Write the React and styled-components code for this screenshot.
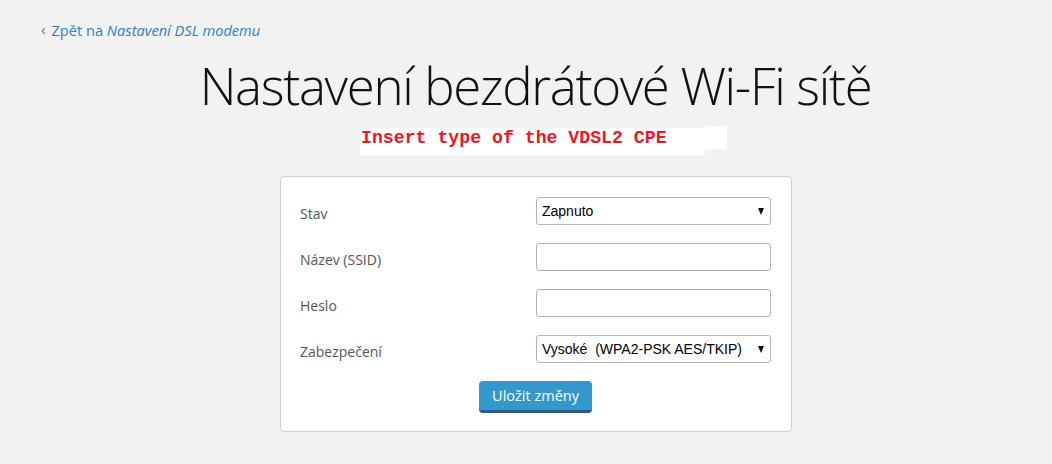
import React, { useState } from "react";
import styled, { createGlobalStyle } from "styled-components";

const Global = createGlobalStyle`
  html, body { margin: 0; padding: 0; background: #f2f2f2; }
  body { font-family: "Open Sans", "Liberation Sans", sans-serif; }
`;

const Page = styled.div`
  width: 1052px;
  height: 464px;
  box-sizing: border-box;
  padding-top: 20px;
  display: flex;
  flex-direction: column;
  overflow: hidden;
`;

const BackLink = styled.a`
  margin-left: 41px;
  font-size: 14.6px;
  line-height: 20px;
  color: #2b82c9;
  text-decoration: none;
  display: flex;
  align-items: center;
  gap: 6px;
  em { font-style: italic; }
`;

const Chevron = styled.span`
  font-size: 15px;
  line-height: 20px;
  margin-top: -2px;
`;

const Title = styled.h1`
  margin: 13px 0 0;
  padding-left: 19px;
  text-align: center;
  font-weight: 300;
  font-size: 51px;
  line-height: 64px;
  color: #111;
  letter-spacing: -1.33px;
`;

const Badge = styled.div`
  align-self: flex-start;
  margin: 9px 0 0 360px;
  display: flex;
  align-items: flex-start;
`;

const BadgeMain = styled.div`
  background: #fff;
  width: 345px;
  box-sizing: border-box;
  padding: 1px 0 8px 1px;
  margin-top: 2px;
  font-family: "Liberation Mono", "DejaVu Sans Mono", monospace;
  font-weight: bold;
  font-size: 18.2px;
  line-height: 18px;
  color: #ee1526;
  white-space: pre;
`;

const BadgeTail = styled.div`
  background: #fff;
  width: 22px;
  height: 23px;
`;

const Card = styled.form`
  align-self: flex-start;
  margin: 21px 0 0 280px;
  width: 512px;
  box-sizing: border-box;
  background: #fff;
  border: 1px solid #cfcfcf;
  border-radius: 4px;
  padding: 20px 20px 18px 19px;
  display: flex;
  flex-direction: column;
  gap: 18px;
`;

const Row = styled.div`
  display: flex;
  align-items: center;
  justify-content: space-between;
  height: 28px;
`;

const Label = styled.label`
  font-size: 14px;
  color: #555;
  margin-top: 4px;
`;

const FieldBox = styled.div`
  position: relative;
  width: 235px;
  height: 28px;
`;

const Input = styled.input`
  box-sizing: border-box;
  width: 100%;
  height: 100%;
  border: 1px solid #b4b4b4;
  border-radius: 3px;
  background: #fff;
  padding: 0 6px;
  font-family: "Liberation Sans", Arial, sans-serif;
  font-size: 14px;
  outline: none;
`;

const Select = styled.select`
  appearance: none;
  -webkit-appearance: none;
  box-sizing: border-box;
  width: 100%;
  height: 100%;
  border: 1px solid #b4b4b4;
  border-radius: 3px;
  background: #fff;
  padding: 0 20px 0 5px;
  font-family: "Liberation Sans", Arial, sans-serif;
  font-size: 14px;
  color: #000;
  outline: none;
`;

const Arrow = styled.span`
  position: absolute;
  right: 7px;
  top: 11px;
  width: 0;
  height: 0;
  border-left: 3.5px solid transparent;
  border-right: 3.5px solid transparent;
  border-top: 7px solid #111;
  pointer-events: none;
`;

const Actions = styled.div`
  display: flex;
  justify-content: center;
`;

const Button = styled.button`
  width: 113px;
  height: 32px;
  box-sizing: border-box;
  border: none;
  border-bottom: 3px solid #265a88;
  border-radius: 4px;
  background: #3399cc;
  color: #fff;
  font-family: "Open Sans", "Liberation Sans", sans-serif;
  font-size: 14.5px;
  padding: 0 0 1px;
  cursor: pointer;
`;

const Field = ({ label, children }) => (
  <Row>
    <Label>{label}</Label>
    <FieldBox>{children}</FieldBox>
  </Row>
);

export default function App() {
  const [state, setState] = useState("on");
  const [security, setSecurity] = useState("high");

  return (
    <Page>
      <Global />
      <BackLink href="#">
        <Chevron>‹</Chevron>
        <span>
          Zpět na <em>Nastavení DSL modemu</em>
        </span>
      </BackLink>
      <Title>Nastavení bezdrátové Wi-Fi sítě</Title>
      <Badge>
        <BadgeMain>Insert type of the VDSL2 CPE</BadgeMain>
        <BadgeTail />
      </Badge>
      <Card onSubmit={(e) => e.preventDefault()}>
        <Field label="Stav">
          <Select value={state} onChange={(e) => setState(e.target.value)}>
            <option value="on">Zapnuto</option>
            <option value="off">Vypnuto</option>
          </Select>
          <Arrow />
        </Field>
        <Field label="Název (SSID)">
          <Input type="text" />
        </Field>
        <Field label="Heslo">
          <Input type="password" />
        </Field>
        <Field label="Zabezpečení">
          <Select value={security} onChange={(e) => setSecurity(e.target.value)}>
            <option value="high">Vysoké&nbsp; (WPA2-PSK AES/TKIP)</option>
            <option value="none">Žádné</option>
          </Select>
          <Arrow />
        </Field>
        <Actions>
          <Button type="submit">Uložit změny</Button>
        </Actions>
      </Card>
    </Page>
  );
}
